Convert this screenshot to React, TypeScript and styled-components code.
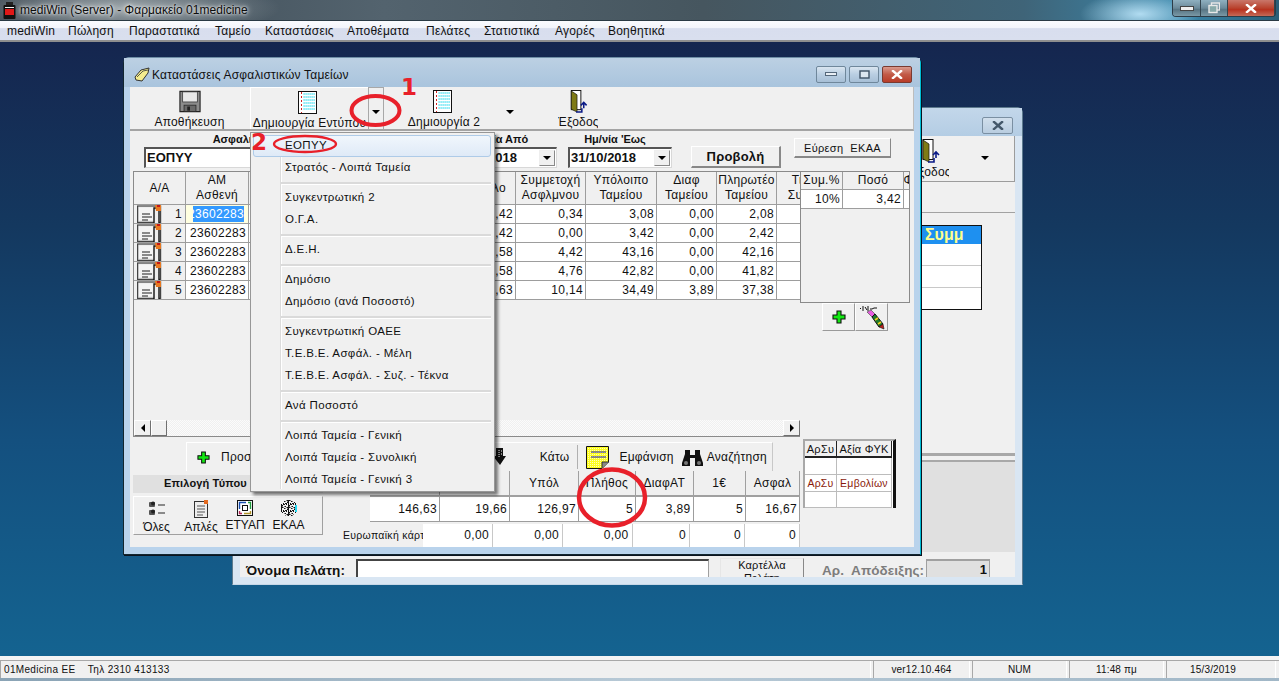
import React from "react";
import styled, { createGlobalStyle } from "styled-components";

const GlobalStyle = createGlobalStyle`
  html, body { margin: 0; padding: 0; width: 1279px; height: 681px; overflow: hidden; }
  body { font-family: "Liberation Sans", Arial, sans-serif; font-size: 12px; color: #111; }
  * { box-sizing: border-box; }
`;

const Screen = styled.div`
  width: 1279px; height: 681px; display: flex; flex-direction: column; overflow: hidden;
`;
const AppTitleBar = styled.div`
  height: 21px; display: flex; align-items: center; padding-left: 3px; gap: 4px; position: relative; flex: none;
  border-bottom: 1px solid #2a3a44;
  background:
    radial-gradient(ellipse 60px 22px at 1140px 14px, rgba(190,230,250,.9), rgba(190,230,250,0)),
    radial-gradient(ellipse 160px 30px at 120px 8px, rgba(235,240,240,.55), rgba(235,240,240,0)),
    linear-gradient(90deg, #3a4650 0%, #53636e 30%, #46565f 55%, #3f6478 80%, #3a87ab 92%, #2c5f78 100%);
`;
const AppTitle = styled.span`
  font-size: 12px; color: #0c0c0c; text-shadow: 0 0 6px #fff, 0 0 3px #fff; letter-spacing: .03px;
`;
const CaptionGroup = styled.div`
  position: absolute; right: 3px; top: 0; height: 17px; display: flex; border: 1px solid #2d3c47; border-top: 0;
  border-radius: 0 0 4px 4px; overflow: hidden;
`;
const CaptionButton = styled.div<{ $w: number; $close?: boolean }>`
  width: ${p => p.$w}px; display: flex; align-items: center; justify-content: center;
  border-right: 1px solid #33454f;
  background: ${p => p.$close
    ? "linear-gradient(180deg,#c9776a 0%,#b9432e 50%,#b8321f 60%,#c56a57 100%)"
    : "linear-gradient(180deg,#8fb0c0 0%,#6c8a9a 50%,#587584 60%,#7b99a6 100%)"};
`;
const MenuBar = styled.div`
  height: 21px; flex: none; display: flex; align-items: center; padding-left: 7px;
  background: linear-gradient(180deg, #fafbfe 0%, #f3f5fb 35%, #d8deee 40%, #d9dfee 95%);
  border-bottom: 2px solid #8f8f8f;
`;
const MenuLabel = styled.span<{ $w: number }>`
  width: ${p => p.$w}px; font-size: 12px; letter-spacing: .22px; white-space: nowrap; flex: none;
`;
const Desktop = styled.div`
  flex: 1; position: relative; overflow: hidden;
  background: linear-gradient(180deg, #15264f 0%, #14385f 30%, #14507f 65%, #146390 100%);
`;
const StatusBar = styled.div`
  height: 25px; flex: none; display: flex; flex-direction: column; background: #f4f4f4; padding-top: 4px;
`;
const StatusPanels = styled.div`
  height: 18px; display: flex; gap: 2px; padding: 0 3px 0 0; background: #f0f0f0;
  border-top: 1px solid #a8a8a8;
`;
const StatusPanel = styled.div<{ $w?: number; $pr?: number }>`
  ${p => p.$w ? `width:${p.$w}px; justify-content:center;` : "flex:1; padding-left: 3px;"}
  ${p => p.$pr ? `padding-right:${p.$pr}px;` : ""}
  display: flex; align-items: center; font-size: 10px; letter-spacing: ${p => p.$w ? ".15px" : ".32px"};
  border-left: 1px solid #a8a8a8; border-right: 1px solid #fff; white-space: pre;
`;
const StatusEdge = styled.div`
  height: 3px; background: linear-gradient(90deg,#8aa3b5,#b7c9d6 50%,#a1b7c7);
`;

/* ---------- windows ---------- */
const BackWindow = styled.div`
  position: absolute; left: 232px; top: 65px; width: 791px; height: 478px; display: flex; flex-direction: column;
  background: #d9e6f3; border-radius: 6px 6px 0 0; padding: 0 7px 7px 7px;
  border: 1px solid #5d7a8e; border-bottom-color: #c7d7e7;
`;
const BackCaption = styled.div`
  height: 28px; flex: none; display: flex; justify-content: flex-end; align-items: flex-start; padding: 9px 2px 0 0;
  background: linear-gradient(180deg, #c3d7ea, #b4cde4);
  margin: 0 -7px; padding-right: 9px;
`;
const GhostClose = styled.div`
  width: 31px; height: 17px; display: flex; align-items: center; justify-content: center;
  border: 1px solid #7a8fa2; border-radius: 2px; background: linear-gradient(180deg,#d1dfec,#b9cde0);
`;
const BackBody = styled.div`
  flex: 1; display: flex; flex-direction: column; background: #f0f0f0; min-height: 0;
`;
const BackToolbar = styled.div`
  height: 46px; flex: none; display: flex; justify-content: flex-end; align-items: flex-start; gap: 31px;
  padding: 0 24px 0 0; border: 1px solid #c6c6c6; border-top: 0; border-right-color: #9c9c9c; border-bottom-color: #9c9c9c;
`;
const BackStrip = styled.div`
  height: 31px; flex: none; border-bottom: 1px solid #a2a2a2;
`;
const SummTableSlot = styled.div`
  flex: 1; display: flex; justify-content: flex-end; padding: 12px 33px 0 0; min-height: 0;
`;
const SummTable = styled.div`
  width: 110px; height: 85px; display: flex; flex-direction: column; background: #fff;
  border-top: 1px solid #111; border-right: 1px solid #111; border-bottom: 1px solid #111;
`;
const SummHead = styled.div`
  height: 18px; background: #1e90f0; color: #ffff8c; font-weight: 700; font-size: 16px; padding-left: 53px;
  white-space: nowrap; overflow: hidden; line-height: 18px;
`;
const SummRow = styled.div`
  flex: 1; border-bottom: 1px solid #c8c8c8;
  &:last-child { border-bottom: 0; }
`;
const BackDivider = styled.div`
  height: 9px; flex: none; background: #f0f0f0; border-top: 3px solid #a8a8a8; border-bottom: 2px solid #a8a8a8;
`;
const BackGreyPanel = styled.div`
  height: 90px; flex: none; background: #e0e0e0;
`;
const CustomerRow = styled.div`
  height: 25px; flex: none; display: flex; align-items: flex-start; overflow: hidden; padding: 7px 0 0 6px; background: #f0f0f0;
`;
const CustomerLabel = styled.span`
  width: 110px; margin-top: 3px; font-weight: 700; font-size: 13.5px; line-height: 18px; white-space: nowrap; letter-spacing: .1px;
`;
const CustomerInput = styled.div`
  width: 353px; height: 22px; background: #fff; border: 1px solid #a0a0a0; border-top: 2px solid #444; border-left: 2px solid #444;
`;
const CardButton = styled.div`
  margin-left: 11px; margin-top: -1px; width: 84px; height: 32px; font-size: 11px; text-align: center; line-height: 13px; letter-spacing: .2px;
  background: #f0f0f0; border: 1px solid #e6e6e6; border-right: 1px solid #888;
`;
const ReceiptLabel = styled.span`
  margin-left: 18px; margin-top: 2px; width: 104px; font-weight: 700; font-size: 13.5px; color: #7d7d7d; line-height: 20px; white-space: pre; letter-spacing: .05px;
`;
const ReceiptBox = styled.div`
  width: 64px; height: 22px; background: #e0e0e0; border: 1px solid #a0a0a0; border-top-width: 2px; text-align: right;
  font-weight: 700; font-size: 13px; padding-right: 2px; line-height: 17px;
`;

const MainWindow = styled.div`
  position: absolute; left: 123px; top: 15px; width: 798px; height: 498px; display: flex; flex-direction: column;
  background: #b9d3ec; border-radius: 6px 6px 0 0; padding: 0 6px 7px 6px;
  border: 1px solid #12262f; border-top-color: #6f8ea6; border-right-color: #00bcd4;
  box-shadow: 1px 1px 0 #0a1420;
`;
const WinTitle = styled.div`
  height: 29px; flex: none; display: flex; align-items: center; gap: 2px; padding: 5px 0 0 10px; position: relative;
  margin: 0 -6px;
  background: linear-gradient(180deg, #bcd0e3 0%, #a9c4dd 100%);
`;
const WinTitleText = styled.span`
  font-size: 12px; letter-spacing: .2px; white-space: nowrap;
`;
const WinCaptionGroup = styled.div`
  position: absolute; right: 8px; top: 8px; display: flex; gap: 3px;
`;
const WinCaptionBtn = styled.div<{ $red?: boolean }>`
  width: 30px; height: 17px; display: flex; align-items: center; justify-content: center; border-radius: 2px;
  border: 1px solid ${p => p.$red ? "#7a3a30" : "#6f879b"};
  background: ${p => p.$red
    ? "linear-gradient(180deg,#d99a8e 0%,#c25a47 50%,#b83c28 100%)"
    : "linear-gradient(180deg,#d9e5f0 0%,#b9cee2 50%,#a7bfd6 100%)"};
`;
const WinBody = styled.div`
  flex: 1; min-height: 0; display: flex; flex-direction: column; background: #f0f0f0;
`;
const Toolbar = styled.div`
  height: 44px; flex: none; display: flex; align-items: stretch; background: #f0f0f0;
  border-bottom: 2px solid #a4a4a4; border-right: 1px solid #bdbdbd;
`;
const ToolButton = styled.div<{ $w: number; $ml?: number; $raised?: boolean }>`
  width: ${p => p.$w}px; margin-left: ${p => p.$ml ?? 0}px; flex: none; display: flex; flex-direction: column; align-items: center;
  padding-top: 3px; font-size: 12px; letter-spacing: .2px; white-space: nowrap; overflow: hidden;
  ${p => p.$raised ? "background:#f0f0f0; border-top:1px solid #fff; border-left:1px solid #fff;" : ""}
`;
const ToolIconSlot = styled.span`
  display: flex; margin-right: 4px;
`;
const ToolLabel = styled.span`
  margin-top: 2px; line-height: 14px;
`;
const ToolArrowBox = styled.div<{ $outlined?: boolean; $w: number; $ml?: number }>`
  width: ${p => p.$w}px; margin-left: ${p => p.$ml ?? 0}px; flex: none; display: flex; align-items: center; justify-content: center; padding-top: 7px;
  ${p => p.$outlined ? "border: 1px solid #a8a8a8; border-bottom: 0;" : ""}
`;
const BackArrow = styled.div`
  width: 10px; height: 44px; flex: none; display: flex; align-items: center; justify-content: center;
`;
const Caret = styled.span`
  width: 0; height: 0; border-left: 4px solid transparent; border-right: 4px solid transparent; border-top: 4px solid #000;
`;

const FilterRow = styled.div`
  height: 40px; flex: none; display: flex; align-items: flex-start; padding-left: 14px; position: relative;
`;
const FilterField = styled.div<{ $w: number; $ml?: number }>`
  width: ${p => p.$w}px; margin-left: ${p => p.$ml ?? 0}px; flex: none; display: flex; flex-direction: column; align-items: center;
`;
const FilterLabel = styled.span<{ $mr?: number }>`
  font-size: 11px; font-weight: 700; line-height: 14px; height: 14px; margin-top: 1px; margin-right: ${p => p.$mr ?? 0}px; white-space: nowrap;
`;
const TextBox = styled.div<{ $pl?: number }>`
  margin-top: 1px; width: 100%; height: 21px; background: #fff; border: 1px solid #d8d8d8; border-top: 2px solid #555; border-left: 2px solid #555;
  font-weight: 700; font-size: 13px; line-height: 18px; padding-left: ${p => p.$pl ?? 1}px; overflow: hidden; white-space: nowrap;
  display: flex; justify-content: space-between;
`;
const ComboArrow = styled.span`
  width: 16px; height: 16px; margin: 1px 1px 0 0; flex: none; display: flex; align-items: center; justify-content: center; background: #f0f0f0;
  border: 1px solid #888; border-top-color: #eee; border-left-color: #eee;
`;
const ViewButton = styled.div`
  margin: 15px 0 0 19px; width: 90px; height: 22px; flex: none; background: #f0f0f0; font-weight: 700; font-size: 13px; text-align: center; line-height: 19px;
  border: 1px solid #fff; border-right: 2px solid #888; border-bottom: 2px solid #888; letter-spacing: .2px;
`;
const FindButton = styled.div`
  margin: 7px 0 0 13px; width: 97px; height: 20px; flex: none; background: #f0f0f0; font-size: 11px; text-align: center; line-height: 18px; letter-spacing: .35px;
  border: 1px solid #fff; border-right: 1px solid #888; border-bottom: 2px solid #888; white-space: pre;
`;

const Content = styled.div`
  flex: 1; min-height: 0; display: flex; padding-left: 3px;
`;
const LeftColumn = styled.div`
  width: 667px; flex: none; display: flex; flex-direction: column;
`;
const GridFrame = styled.div`
  width: 667px; height: 266px; flex: none; position: relative; overflow: hidden; background: #f0f0f0;
  border-top: 1px solid #8a8a8a; border-left: 1px solid #8a8a8a; border-bottom: 1px solid #8a8a8a;
`;
const GridRow = styled.div<{ $cols: string; $h: number }>`
  display: grid; grid-template-columns: ${p => p.$cols}; height: ${p => p.$h}px;
`;
const HeadCell = styled.div`
  display: flex; flex-direction: column; align-items: center; justify-content: center; text-align: center;
  font-size: 12px; line-height: 15px; letter-spacing: .3px; white-space: nowrap; overflow: hidden;
  border-right: 1px solid #9d9d9d; border-bottom: 1px solid #9d9d9d; background: #f0f0f0;
`;
const DataCell = styled.div<{ $left?: boolean }>`
  display: flex; align-items: center; justify-content: ${p => p.$left ? "flex-start" : "flex-end"}; padding: 0 2px;
  font-size: 12px; letter-spacing: .34px; white-space: nowrap; overflow: hidden; background: #fff;
  border-right: 1px solid #9d9d9d; border-bottom: 1px solid #9d9d9d;
`;
const IndexCell = styled(DataCell)`
  background: #f0f0f0; justify-content: space-between; padding: 0 3px 0 3px;
`;
const EditorCell = styled.div`
  display: flex; align-items: center; justify-content: flex-end; overflow: hidden; background: #ffffe0; padding: 1px 4px 1px 7px;
  border-right: 1px solid #9d9d9d; border-bottom: 1px solid #9d9d9d;
`;
const Selected = styled.span`
  display: block; background: #3399ff; color: #fff; font-size: 12px; letter-spacing: .34px; line-height: 16px; flex: 1; overflow: hidden; direction: rtl;
`;
const HScroll = styled.div`
  position: absolute; left: 0; right: 0; bottom: 0; height: 16px; display: flex; justify-content: space-between;
  background-image: repeating-conic-gradient(#f0f0f0 0 25%, #fbfbfb 0 50%); background-size: 2px 2px;
`;
const ScrollButton = styled.div<{ $w?: number }>`
  width: ${p => p.$w ?? 17}px; height: 16px; display: flex; align-items: center; justify-content: center; background: #f0f0f0;
  border: 1px solid #fff; border-right-color: #707070; border-bottom-color: #707070;
`;
const ScrollLeftGroup = styled.div`
  display: flex;
`;
const TriLeft = styled.span`
  width: 0; height: 0; border-top: 4px solid transparent; border-bottom: 4px solid transparent; border-right: 4px solid #000;
`;
const TriRight = styled.span`
  width: 0; height: 0; border-top: 4px solid transparent; border-bottom: 4px solid transparent; border-left: 4px solid #000;
`;

const NavBar = styled.div`
  margin: 5px 0 0 53px; width: 587px; height: 29px; flex: none; display: flex; align-items: center; background: #f0f0f0;
  border-top: 1px solid #fff; border-left: 1px solid #fff; border-right: 1px solid #c8c8c8; padding-right: 5px; font-size: 12px; letter-spacing: .25px;
  white-space: nowrap;
`;
const NavItem = styled.span<{ $ml?: number }>`
  display: flex; align-items: center; margin-left: ${p => p.$ml ?? 0}px; flex: none;
`;
const NavPush = styled.span`
  flex: 1;
`;
const NavSep = styled.span`
  width: 1px; height: 24px; background: #b0b0b0; margin-left: 8px; flex: none;
`;

const BottomRow = styled.div`
  display: flex; flex: 1; min-height: 0;
`;
const TypePanel = styled.div`
  width: 190px; flex: none; display: flex; flex-direction: column; padding-top: 4px;
`;
const TypeHeader = styled.div`
  height: 18px; background: #e0e0e0; font-weight: 700; font-size: 11px; line-height: 17px; padding-left: 31px; white-space: nowrap; letter-spacing: .15px; overflow: hidden;
`;
const TypeBox = styled.div`
  margin-top: 3px; height: 39px; display: flex; background: #f0f0f0; border-left: 1px solid #fff; border-top: 1px solid #fff;
  border-right: 1px solid #a0a0a0; border-bottom: 1px solid #a0a0a0;
`;
const TypeItem = styled.div<{ $w: number }>`
  width: ${p => p.$w}px; display: flex; flex-direction: column; align-items: center; font-size: 12px; letter-spacing: 0; padding-top: 3px; white-space: nowrap;
`;
const TypeLabel = styled.span`
  margin-top: 2px; line-height: 14px;
`;
const SummaryArea = styled.div`
  margin-left: 20px; width: 457px; display: flex; flex-direction: column; position: relative;
`;
const SummaryTop = styled.div`
  margin-left: 27px;
`;
const SummaryHeadCell = styled.div`
  display: flex; align-items: center; justify-content: center; font-size: 12px; letter-spacing: .3px; white-space: nowrap; overflow: hidden;
  background: #f0f0f0; border-right: 1px solid #a0a0a0; border-bottom: 2px solid #a0a0a0;
`;
const SecondLine = styled.div`
  margin-top: 2px; display: flex; height: 24px;
`;
const EuroLabel = styled.div`
  width: 80px; font-size: 10.5px; line-height: 22px; white-space: nowrap; overflow: hidden; letter-spacing: .3px;
`;
const EuroCell = styled.div<{ $w: number }>`
  width: ${p => p.$w}px; background: #fff; border-right: 1px solid #c8c8c8; text-align: right; padding-right: 3px; font-size: 12px; letter-spacing: .34px; line-height: 22px;
`;

const RightColumn = styled.div`
  width: 110px; flex: none; display: flex; flex-direction: column;
`;
const SideFrame = styled.div`
  width: 110px; height: 132px; flex: none; background: #f0f0f0; overflow: hidden;
  border: 1px solid #8a8a8a;
`;
const SideTools = styled.div`
  margin-left: 22px; display: flex; height: 28px;
`;
const SideTool = styled.div`
  width: 33px; height: 28px; display: flex; align-items: center; justify-content: center; background: #f0f0f0;
  border: 1px solid #fff; border-right: 1px solid #9a9a9a; border-bottom: 1px solid #9a9a9a;
`;
const MiniGrid = styled.div`
  margin: 108px 0 0 3px; width: 93px; height: 69px; flex: none; display: flex; flex-direction: column; background: #fff;
  border: 2px solid #a9a9a9; border-right: 3px solid #111; border-bottom: 0;
`;
const MiniCell = styled.div<{ $red?: boolean }>`
  display: flex; align-items: center; justify-content: center; font-size: 10.5px; letter-spacing: .25px; white-space: nowrap;
  color: ${p => p.$red ? "#8a1a0a" : "#111"}; border-right: 1px solid #bcbcbc; border-bottom: 1px solid #bcbcbc;
`;
const MiniHeadCell = styled(MiniCell)`
  background: #f0f0f0; border-right: 1px solid #222; border-bottom: 2px solid #222; font-size: 11px;
`;

/* ---------- overlays ---------- */
const DropMenu = styled.div`
  position: absolute; left: 126px; top: 74px; width: 245px; height: 360px; z-index: 4; padding: 2px 3px 2px 2px; display: flex; flex-direction: column;
  background: #f0f0f0; border: 1px solid #979797; box-shadow: 3px 3px 3px rgba(0,0,0,.5);
  &::before { content: ""; position: absolute; left: 29px; top: 2px; bottom: 2px; width: 1px; background: #dcdcdc; border-right: 1px solid #fff; }
`;
const DropItem = styled.div<{ $active?: boolean }>`
  height: 22px; flex: none; padding-left: 32px; line-height: 21px; font-size: 11.5px; letter-spacing: .36px; white-space: nowrap; position: relative; color: #111;
  ${p => p.$active ? "background: linear-gradient(180deg,#f0f6fc,#dfeaf7); border: 1px solid #aecbe8; border-radius: 3px; padding-left: 31px; line-height: 19px;" : ""}
`;
const DropSeparator = styled.div`
  height: 8px; flex: none; margin-left: 28px; position: relative;
  &::after { content: ""; position: absolute; left: 0; right: 0; top: 3px; height: 2px; background: #dadada; border-bottom: 1px solid #fff; }
`;
const MarkSvg = styled.svg`
  position: absolute; left: 0; top: 0; z-index: 6; pointer-events: none; overflow: visible;
`;
const Numeral = styled.span<{ $x: number; $y: number }>`
  position: absolute; left: ${p => p.$x}px; top: ${p => p.$y}px; z-index: 7; color: #e8202a; font-weight: 700; font-size: 23px; line-height: 23px; font-family: "DejaVu Sans", "Liberation Sans", sans-serif;
`;

/* ---------- icons ---------- */
const AppIcon = () => (
  <svg width="13" height="17" viewBox="0 0 13 17">
    <rect x="3" y="0" width="7" height="3" fill="#222" />
    <rect x="0.5" y="3" width="12" height="14" rx="1" fill="#111" />
    <rect x="2" y="7" width="9" height="6" fill="#e01818" />
    <rect x="2" y="5" width="9" height="1" fill="#eee" />
  </svg>
);
const FolderGlyph = () => (
  <svg width="16" height="16" viewBox="0 0 16 16">
    <path d="M1 10 L7 3 L15 1 L14 6 L8 14 L2 13 Z" fill="#f4ec8e" stroke="#333" strokeWidth="1" />
    <path d="M3 10 L9 4 L14 3" stroke="#333" fill="none" strokeWidth=".8" />
  </svg>
);
const Floppy = () => (
  <svg width="22" height="23" viewBox="0 0 24 24">
    <path d="M1 1H23V23H1Z" fill="#8c8c8c" stroke="#222" strokeWidth="1.2" />
    <rect x="4" y="1.5" width="16" height="11" fill="#e8e8e8" stroke="#333" strokeWidth=".8" />
    <rect x="5.5" y="16" width="13" height="7" fill="#6a6a6a" stroke="#222" strokeWidth=".8" />
    <rect x="9" y="17.5" width="3" height="4.5" fill="#222" />
  </svg>
);
const SheetIcon = () => (
  <svg width="19" height="23" viewBox="0 0 19 23">
    <rect x=".5" y=".5" width="18" height="22" fill="#fff" stroke="#111" />
    <path d="M3.5 1V22" stroke="#d02020" strokeDasharray="2 2" />
    {[3, 6, 9, 12, 15, 18].map(y => <path key={y} d={`M5.5 ${y}H17`} stroke="#35dcf0" strokeWidth="1.6" strokeDasharray="1.2 .8" />)}
  </svg>
);
const ExitDoor = () => (
  <svg width="20" height="24" viewBox="0 0 20 24">
    <rect x="3" y=".5" width="10" height="20" fill="#fff" stroke="#111" />
    <path d="M3 1 L9 5 V23 L3 20 Z" fill="#7e7a16" stroke="#111" strokeWidth=".7" />
    <path d="M8 23 H14 L14 19 M13 16 l3 -3 3 3 M16 13 V19" stroke="#0a1a86" strokeWidth="1.6" fill="none" />
  </svg>
);
const CloseGlyph = ({ color = "#fff", w = 12, h = 9 }: { color?: string; w?: number; h?: number }) => (
  <svg width={w} height={h} viewBox="0 0 12 9">
    <path d="M2 1 L10 8 M10 1 L2 8" stroke={color} strokeWidth="2.4" strokeLinecap="square" />
  </svg>
);
const RowGlyph = () => (
  <svg width="26" height="18" viewBox="0 0 26 18">
    <rect x=".6" y="1" width="23" height="16.4" fill="#e4e4e4" stroke="#444" strokeWidth="1.2" />
    <rect x="2" y="2.4" width="20" height="13" fill="#f4f4f4" />
    <path d="M5 9H13M5 12H15M5 15H11" stroke="#666" strokeWidth="1.4" />
    <path d="M17 18 V3 H22 V18" fill="#eee" stroke="#111" strokeWidth="1.4" />
    <path d="M18 0 H24 V6 H19 Z" fill="#e87820" />
    <rect x="20" y="0" width="3" height="2" fill="#c21818" />
  </svg>
);
const GreenPlus = ({ s = 14 }: { s?: number }) => (
  <svg width={s} height={s} viewBox="0 0 14 14">
    <path d="M5 1H9V5H13V9H9V13H5V9H1V5H5Z" fill="#12e812" stroke="#111" strokeWidth="1.1" />
  </svg>
);
const DownArrow = () => (
  <svg width="14" height="18" viewBox="0 0 14 18">
    <path d="M3 0H10V8H13L7 17L0 8H3Z" fill="#111" />
    <path d="M6 2V9M8 3H10M8 6H10" stroke="#fff" strokeDasharray="1 1" />
  </svg>
);
const NoteIcon = () => (
  <svg width="23" height="23" viewBox="0 0 23 23">
    <defs>
      <pattern id="yd" width="2" height="2" patternUnits="userSpaceOnUse">
        <rect width="2" height="2" fill="#ffff20" /><rect width="1" height="1" fill="#fffcc0" />
      </pattern>
    </defs>
    <path d="M.5 .5H22.5V16L16 22.5H.5Z" fill="url(#yd)" stroke="#111" />
    <path d="M5 6H20M5 11H20" stroke="#1a1ac0" strokeWidth="1" />
    <path d="M16 22 L16 16H23" fill="#888" stroke="#333" />
  </svg>
);
const Binoculars = () => (
  <svg width="21" height="18" viewBox="0 0 21 18">
    <path d="M3 2H8V7H13V2H18V6L21 15V18H13V10H8V18H0V15L3 6Z" fill="#111" />
    <circle cx="4" cy="15" r="2" fill="#777" /><circle cx="17" cy="15" r="2" fill="#777" />
  </svg>
);
const ListGlyph = () => (
  <svg width="18" height="18" viewBox="0 0 18 18">
    <rect x="1" y="2" width="6" height="5" fill="#555" rx="1" /><rect x="1" y="10" width="6" height="5" fill="#555" rx="1" />
    <circle cx="5" cy="3.5" r="2" fill="#222" /><circle cx="5" cy="11.5" r="2" fill="#222" />
    <rect x="10" y="4" width="7" height="2" fill="#8a8a8a" /><rect x="10" y="12" width="7" height="2" fill="#8a8a8a" />
  </svg>
);
const PageGlyph = () => (
  <svg width="14" height="18" viewBox="0 0 14 18">
    <rect x=".5" y="1.5" width="13" height="16" fill="#eee" stroke="#333" />
    <path d="M3 6H11M3 9H11M3 12H11M3 15H9" stroke="#555" />
    <rect x="10" y="0" width="4" height="4" fill="#e46a20" />
  </svg>
);
const FrameGlyph = () => (
  <svg width="16" height="16" viewBox="0 0 16 16">
    <rect x=".5" y=".5" width="15" height="15" fill="#fff" stroke="#111" />
    <path d="M2.5 9V2.5H9" stroke="#1a4fb0" strokeWidth="1.4" fill="none" />
    <path d="M11 2.5H13.5V9" stroke="#1f9a3c" strokeWidth="1.4" fill="none" />
    <path d="M13.5 11V13.5H7" stroke="#b0942a" strokeWidth="1.4" fill="none" />
    <path d="M5 13.5H2.5V11" stroke="#b02a5a" strokeWidth="1.4" fill="none" />
    <rect x="5.5" y="5.5" width="5" height="5" fill="#fff" stroke="#111" />
  </svg>
);
const QrGlyph = () => {
  const dots: [number, number, string][] = [];
  for (let y = 0; y < 16; y++) for (let x = 0; x < 16; x++) {
    const r = Math.hypot(x - 7.5, y - 7.5);
    if (r > 8.4) continue;
    const v = (x * x * 3 + y * 7 + x * y * 5) % 7;
    if (v === 0 || v === 3) dots.push([x, y, "#111"]);
    else if (v === 5) dots.push([x, y, "#7d7d7d"]);
  }
  return (
    <svg width="16" height="16" viewBox="0 0 16 16">
      {dots.map(([x, y, c]) => <rect key={`${x}-${y}`} x={x} y={y} width="1" height="1" fill={c} />)}
      <rect x="14" y="5" width="2" height="7" fill="#23d6ef" />
    </svg>
  );
};
const WandGlyph = () => (
  <svg width="26" height="25" viewBox="0 0 26 25">
    <path d="M1 3 l1 1 M4 1 v5 M6 2 l2 3 M9 1 v5 M11 4 h2 l2 -1 h3" stroke="#111" strokeWidth="1" fill="none" />
    <path d="M8 7 L12 5 L16 9 L13 12 Z" fill="#e85ce0" stroke="#555" strokeWidth=".7" />
    <path d="M13 12 L16 9 L24 19 L20 22 Z" fill="#1f7a2a" stroke="#111" strokeWidth="1" />
    <path d="M16 15 L19 13 M19 19 L22 17" stroke="#f3d020" strokeWidth="1.6" />
    <path d="M20 22 L24 19 L25 24 Z" fill="#c0201a" stroke="#111" strokeWidth=".6" />
  </svg>
);

/* ---------- data ---------- */
const MENU_TOP = ["mediWin:61", "Πώληση:61", "Παραστατικά:86", "Ταμείο:50", "Καταστάσεις:82", "Αποθέματα:79", "Πελάτες:58", "Στατιστικά:71", "Αγορές:53", "Βοηθητικά:70"];
const GRID_COLS = "52px 63px 207px 60px 70px 71px 60px 60px 55px";
const GRID_ROWS = [
  ["1", "3,42", "0,34", "3,08", "0,00", "2,08"],
  ["2", "3,42", "0,00", "3,42", "0,00", "2,42"],
  ["3", "47,58", "4,42", "43,16", "0,00", "42,16"],
  ["4", "47,58", "4,76", "42,82", "0,00", "41,82"],
  ["5", "44,63", "10,14", "34,49", "3,89", "37,38"],
];
const MENU_GROUPS = [
  ["ΕΟΠΥΥ", "Στρατός - Λοιπά Ταμεία"],
  ["Συγκεντρωτική 2", "Ο.Γ.Α."],
  ["Δ.Ε.Η."],
  ["Δημόσιο", "Δημόσιο (ανά Ποσοστό)"],
  ["Συγκεντρωτική ΟΑΕΕ", "Τ.Ε.Β.Ε. Ασφάλ. - Μέλη", "Τ.Ε.Β.Ε. Ασφάλ. - Συζ. - Τέκνα"],
  ["Ανά Ποσοστό"],
  ["Λοιπά Ταμεία - Γενική", "Λοιπά Ταμεία - Συνολική", "Λοιπά Ταμεία - Γενική 3"],
];
const SUM_COLS = "70px 70px 69px 57px 57.5px 52.5px 54px";
const SUM_HEAD = ["Αξία", "Αμοιβή", "Υπόλ", "Πλήθος", "ΔιαφΑΤ", "1€", "Ασφαλ"];
const SUM_VALS = ["146,63", "19,66", "126,97", "5", "3,89", "5", "16,67"];
const EURO = [[70, "0,00"], [70, "0,00"], [69.5, "0,00"], [57.5, "0"], [55, "0"], [55, "0"]] as [number, string][];

export default function App() {
  return (
    <Screen>
      <GlobalStyle />
      <AppTitleBar>
        <AppIcon />
        <AppTitle>mediWin (Server) - Φαρμακείο 01medicine</AppTitle>
        <CaptionGroup>
          <CaptionButton $w={28}>
            <svg width="14" height="5"><rect x=".5" y=".5" width="13" height="4" fill="#eee" stroke="#444" /></svg>
          </CaptionButton>
          <CaptionButton $w={27}>
            <svg width="12" height="12" viewBox="0 0 12 12"><rect x="3.5" y="1" width="8" height="7" fill="none" stroke="#e8e8e8" strokeWidth="1.4" /><rect x="1" y="3.5" width="8" height="7" fill="#8aa" stroke="#e8e8e8" strokeWidth="1.4" /></svg>
          </CaptionButton>
          <CaptionButton $w={47} $close><CloseGlyph /></CaptionButton>
        </CaptionGroup>
      </AppTitleBar>
      <MenuBar>
        {MENU_TOP.map(m => {
          const [t, w] = m.split(":");
          return <MenuLabel key={t} $w={+w}>{t}</MenuLabel>;
        })}
      </MenuBar>
      <Desktop>
        <BackWindow>
          <BackCaption>
            <GhostClose><CloseGlyph color="#44586a" /></GhostClose>
          </BackCaption>
          <BackBody>
            <BackToolbar>
              <ToolButton $w={38}><ExitDoor /><ToolLabel>Έξοδος</ToolLabel></ToolButton>
              <BackArrow><Caret /></BackArrow>
            </BackToolbar>
            <BackStrip />
            <SummTableSlot>
              <SummTable>
                <SummHead>Συμμ</SummHead>
                <SummRow /><SummRow /><SummRow />
              </SummTable>
            </SummTableSlot>
            <BackDivider />
            <BackGreyPanel />
            <CustomerRow>
              <CustomerLabel>Όνομα Πελάτη:</CustomerLabel>
              <CustomerInput />
              <CardButton>Καρτέλλα<br />Πελάτη</CardButton>
              <ReceiptLabel>{"Αρ.  Απόδειξης:"}</ReceiptLabel>
              <ReceiptBox>1</ReceiptBox>
            </CustomerRow>
          </BackBody>
        </BackWindow>

        <MainWindow>
          <WinTitle>
            <FolderGlyph />
            <WinTitleText>Καταστάσεις Ασφαλιστικών Ταμείων</WinTitleText>
            <WinCaptionGroup>
              <WinCaptionBtn><svg width="12" height="5"><rect x=".5" y=".5" width="11" height="3" fill="#e8eef4" stroke="#54677a" /></svg></WinCaptionBtn>
              <WinCaptionBtn><svg width="11" height="9"><rect x="1" y="1" width="9" height="7" fill="#dce6f0" stroke="#3d5064" strokeWidth="1.4" /></svg></WinCaptionBtn>
              <WinCaptionBtn $red><CloseGlyph /></WinCaptionBtn>
            </WinCaptionGroup>
          </WinTitle>
          <WinBody>
            <Toolbar>
              <ToolButton $w={91} $ml={14}><Floppy /><ToolLabel>Αποθήκευση</ToolLabel></ToolButton>
              <ToolButton $w={118} $ml={15} $raised><ToolIconSlot><SheetIcon /></ToolIconSlot><ToolLabel>Δημιουργία Εντύπου</ToolLabel></ToolButton>
              <ToolArrowBox $w={16} $outlined><Caret /></ToolArrowBox>
              <ToolButton $w={96} $ml={12}><ToolIconSlot><SheetIcon /></ToolIconSlot><ToolLabel>Δημιουργία 2</ToolLabel></ToolButton>
              <ToolArrowBox $w={10} $ml={13}><Caret /></ToolArrowBox>
              <ToolButton $w={40} $ml={43}><ExitDoor /><ToolLabel>Έξοδος</ToolLabel></ToolButton>
            </Toolbar>
            <FilterRow>
              <FilterField $w={296}>
                <FilterLabel $mr={54}>Ασφαλιστικό Ταμείο</FilterLabel>
                <TextBox>ΕΟΠΥΥ</TextBox>
              </FilterField>
              <FilterField $w={117}>
                <FilterLabel>Ημ/νία Από</FilterLabel>
                <TextBox $pl={10}>01/10/2018<ComboArrow><Caret /></ComboArrow></TextBox>
              </FilterField>
              <FilterField $w={104} $ml={11}>
                <FilterLabel $mr={10}>Ημ/νία 'Εως</FilterLabel>
                <TextBox>31/10/2018<ComboArrow><Caret /></ComboArrow></TextBox>
              </FilterField>
              <ViewButton>Προβολή</ViewButton>
              <FindButton>{"Εύρεση  ΕΚΑΑ"}</FindButton>
            </FilterRow>
            <Content>
              <LeftColumn>
                <GridFrame>
                  <GridRow $cols={GRID_COLS} $h={33}>
                    <HeadCell>Α/Α</HeadCell>
                    <HeadCell><span>ΑΜ</span><span>Ασθενή</span></HeadCell>
                    <HeadCell />
                    <HeadCell>Σύνολο</HeadCell>
                    <HeadCell><span>Συμμετοχή</span><span>Ασφλμνου</span></HeadCell>
                    <HeadCell><span>Υπόλοιπο</span><span>Ταμείου</span></HeadCell>
                    <HeadCell><span>Διαφ</span><span>Ταμείου</span></HeadCell>
                    <HeadCell><span>Πληρωτέο</span><span>Ταμείου</span></HeadCell>
                    <HeadCell><span>Τιμή</span><span>Συμμ.</span></HeadCell>
                  </GridRow>
                  {GRID_ROWS.map((r, i) => (
                    <GridRow key={r[0]} $cols={GRID_COLS} $h={19}>
                      <IndexCell><RowGlyph />{r[0]}</IndexCell>
                      {i === 0
                        ? <EditorCell><Selected>23602283</Selected></EditorCell>
                        : <DataCell>23602283</DataCell>}
                      <DataCell />
                      <DataCell>{r[1]}</DataCell>
                      <DataCell>{r[2]}</DataCell>
                      <DataCell>{r[3]}</DataCell>
                      <DataCell>{r[4]}</DataCell>
                      <DataCell>{r[5]}</DataCell>
                      <DataCell />
                    </GridRow>
                  ))}
                  <HScroll>
                    <ScrollLeftGroup>
                      <ScrollButton><TriLeft /></ScrollButton>
                      <ScrollButton $w={16} />
                    </ScrollLeftGroup>
                    <ScrollButton><TriRight /></ScrollButton>
                  </HScroll>
                </GridFrame>
                <NavBar>
                  <NavItem $ml={10}><GreenPlus s={13} /></NavItem>
                  <NavItem $ml={11}>Προσθήκη</NavItem>
                  <NavPush />
                  <NavItem><DownArrow /></NavItem>
                  <NavItem $ml={33}>Κάτω</NavItem>
                  <NavSep />
                  <NavItem $ml={8}><NoteIcon /></NavItem>
                  <NavItem $ml={10}>Εμφάνιση</NavItem>
                  <NavItem $ml={8}><Binoculars /></NavItem>
                  <NavItem $ml={4}>Αναζήτηση</NavItem>
                </NavBar>
                <BottomRow>
                  <TypePanel>
                    <TypeHeader>Επιλογή Τύπου Συνταγής</TypeHeader>
                    <TypeBox>
                      <TypeItem $w={45}><ListGlyph /><TypeLabel>Όλες</TypeLabel></TypeItem>
                      <TypeItem $w={44}><PageGlyph /><TypeLabel>Απλές</TypeLabel></TypeItem>
                      <TypeItem $w={44}><FrameGlyph /><TypeLabel>ΕΤΥΑΠ</TypeLabel></TypeItem>
                      <TypeItem $w={43}><QrGlyph /><TypeLabel>ΕΚΑΑ</TypeLabel></TypeItem>
                    </TypeBox>
                  </TypePanel>
                  <SummaryArea>
                    <SummaryTop>
                      <GridRow $cols={SUM_COLS} $h={26}>
                        {SUM_HEAD.map(h => <SummaryHeadCell key={h}>{h}</SummaryHeadCell>)}
                      </GridRow>
                      <GridRow $cols={SUM_COLS} $h={25}>
                        {SUM_VALS.map((v, i) => <DataCell key={i}>{v}</DataCell>)}
                      </GridRow>
                    </SummaryTop>
                    <SecondLine>
                      <EuroLabel>Ευρωπαϊκή κάρτα</EuroLabel>
                      {EURO.map(([w, v], i) => <EuroCell key={i} $w={w}>{v}</EuroCell>)}
                    </SecondLine>
                  </SummaryArea>
                </BottomRow>
              </LeftColumn>
              <RightColumn>
                <SideFrame>
                  <GridRow $cols="42px 61px 10px" $h={18}>
                    <HeadCell>Συμ.%</HeadCell>
                    <HeadCell>Ποσό</HeadCell>
                    <HeadCell>Φ</HeadCell>
                  </GridRow>
                  <GridRow $cols="42px 61px 10px" $h={19}>
                    <DataCell>10%</DataCell>
                    <DataCell>3,42</DataCell>
                    <DataCell />
                  </GridRow>
                </SideFrame>
                <SideTools>
                  <SideTool><GreenPlus s={14} /></SideTool>
                  <SideTool><WandGlyph /></SideTool>
                </SideTools>
                <MiniGrid>
                  <GridRow $cols="32px 55px" $h={17}>
                    <MiniHeadCell>ΑρΣυ</MiniHeadCell><MiniHeadCell>Αξία ΦΥΚ</MiniHeadCell>
                  </GridRow>
                  <GridRow $cols="32px 55px" $h={17}><MiniCell /><MiniCell /></GridRow>
                  <GridRow $cols="32px 55px" $h={17}><MiniCell $red>ΑρΣυ</MiniCell><MiniCell $red>Εμβολίων</MiniCell></GridRow>
                  <GridRow $cols="32px 55px" $h={16}><MiniCell /><MiniCell /></GridRow>
                </MiniGrid>
              </RightColumn>
            </Content>
          </WinBody>

          <DropMenu>
            {MENU_GROUPS.map((g, gi) => (
              <React.Fragment key={gi}>
                {gi > 0 && <DropSeparator />}
                {g.map(t => <DropItem key={t} $active={t === "ΕΟΠΥΥ"}>{t}</DropItem>)}
              </React.Fragment>
            ))}
          </DropMenu>
          <Numeral $x={277} $y={18}>1</Numeral>
          <Numeral $x={127} $y={73}>2</Numeral>
          <MarkSvg width="798" height="498">
            <ellipse cx="251.5" cy="52.5" rx="24" ry="14.5" fill="none" stroke="#e8202a" strokeWidth="4" />
            <ellipse cx="181" cy="86" rx="31" ry="8" fill="none" stroke="#e8202a" strokeWidth="2.4" />
            <ellipse cx="488" cy="439.5" rx="33" ry="28" fill="none" stroke="#e8202a" strokeWidth="4.5" />
          </MarkSvg>
        </MainWindow>
      </Desktop>
      <StatusBar>
        <StatusPanels>
          <StatusPanel>{"01Medicina ΕΕ    Τηλ 2310 413133"}</StatusPanel>
          <StatusPanel $w={97}>ver12.10.464</StatusPanel>
          <StatusPanel $w={95}>NUM</StatusPanel>
          <StatusPanel $w={95}>11:48 πμ</StatusPanel>
          <StatusPanel $w={110} $pr={16}>15/3/2019</StatusPanel>
        </StatusPanels>
        <StatusEdge />
      </StatusBar>
    </Screen>
  );
}
